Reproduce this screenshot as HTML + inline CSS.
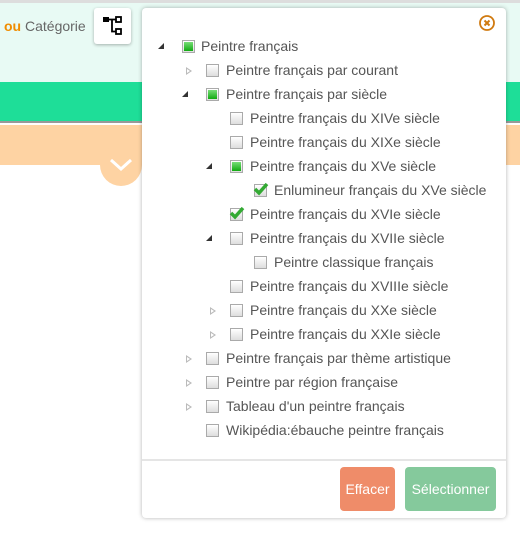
<!DOCTYPE html>
<html><head><meta charset="utf-8"><style>
*{box-sizing:border-box}
body{margin:0;width:520px;height:542px;overflow:hidden;background:#fff;font-family:"Liberation Sans",sans-serif;position:relative}
.top{position:absolute;left:0;top:0;width:520px;height:82px;background:#e8faf4;border-top:3px solid #ddd}
.green{position:absolute;left:0;top:82px;width:520px;height:41px;background:#1ede98;border-bottom:2px solid #999}
.peach{position:absolute;left:0;top:125px;width:520px;height:40px;background:#fed3a3}
.circ{position:absolute;left:100px;top:144px;width:42px;height:42px;border-radius:50%;background:#fed3a3}
.lbl{position:absolute;left:4px;top:18px;font-size:14px;color:#666}
.lbl b{color:#f08c00}
.ib{position:absolute;left:94px;top:8px;width:37px;height:36px;background:#fff;border-radius:3px;box-shadow:0 1px 3px rgba(0,0,0,.3)}
.pop{position:absolute;left:142px;top:8px;width:364px;height:510px;background:#fff;border-radius:4px;box-shadow:0 0 4px rgba(0,0,0,.3)}
.sep{position:absolute;left:0;top:451px;width:364px;height:2px;background:#e5e5e5}
.row{position:absolute;height:20px;font-size:14px;color:#555;white-space:nowrap;line-height:20px}
.cb{position:absolute;width:13px;height:13px;border:1px solid #aaa;background:linear-gradient(#fff,#ddd);top:4px}
.cb.p::after{content:"";position:absolute;left:1px;top:1px;width:9px;height:9px;background:linear-gradient(#7d7,#1a1)}
.tri{position:absolute;top:7px;width:0;height:0}
.tri.o{border-left:6px solid transparent;border-bottom:6px solid #333}
.tri.c{border-left:6px solid #bbb;border-top:4px solid transparent;border-bottom:4px solid transparent;}
.tri.c::after{content:"";position:absolute;left:-5px;top:-2px;border-left:3px solid #fff;border-top:2px solid transparent;border-bottom:2px solid transparent}
.btn{position:absolute;top:459px;height:44px;border-radius:4px;color:#fff;font-size:14px;line-height:44px;text-align:center}
</style></head><body>
<div class="top"></div><div class="green"></div><div class="peach"></div>
<div class="circ"><svg width="42" height="42"><path d="M11 16 L21 25 L31 16" stroke="#fff" stroke-width="3" fill="none"/></svg></div>
<div class="lbl"><b>ou</b> Catégorie</div>
<div class="ib"><svg width="37" height="36"><rect x="9" y="9" width="6" height="5" fill="#000"/><path d="M15 11.5H22M18 11.5V23.5H22" stroke="#000" stroke-width="1.8" fill="none"/><rect x="22" y="9" width="5" height="5" fill="#fff" stroke="#000" stroke-width="1.8"/><rect x="22" y="21" width="5" height="5" fill="#fff" stroke="#000" stroke-width="1.8"/></svg></div>
<div class="pop">
<svg style="position:absolute;left:336px;top:6px" width="18" height="18"><circle cx="9" cy="9" r="7" stroke="#d07a10" stroke-width="1.8" fill="none"/><path d="M6.5 6.5L11.5 11.5M11.5 6.5L6.5 11.5" stroke="#d07a10" stroke-width="2"/></svg>
<div class="sep"></div>
<div class="btn" style="left:198px;width:55px;background:#ef8c69">Effacer</div>
<div class="btn" style="left:263px;width:91px;background:#85c99c">Sélectionner</div>
</div>
<div id="tree"></div>
<script>
var rows=[[0,'o','p','Peintre français'],[1,'c','','Peintre français par courant'],[1,'o','p','Peintre français par siècle'],[2,'','','Peintre français du XIVe siècle'],[2,'','','Peintre français du XIXe siècle'],[2,'o','p','Peintre français du XVe siècle'],[3,'','k','Enlumineur français du XVe siècle'],[2,'','k','Peintre français du XVIe siècle'],[2,'o','','Peintre français du XVIIe siècle'],[3,'','','Peintre classique français'],[2,'','','Peintre français du XVIIIe siècle'],[2,'c','','Peintre français du XXe siècle'],[2,'c','','Peintre français du XXIe siècle'],[1,'c','','Peintre français par thème artistique'],[1,'c','','Peintre par région française'],[1,'c','','Tableau d\'un peintre français'],[1,'','','Wikipédia:ébauche peintre français']];
var h='';rows.forEach(function(r,i){var y=36+i*24,x=158+r[0]*24;
h+='<div class="row" style="left:'+x+'px;top:'+y+'px">';
if(r[1])h+='<div class="tri '+r[1]+'" style="left:'+(r[1]=='o'?0:4)+'px"></div>';
h+='<div class="cb '+(r[2]=='p'?'p':'')+'" style="left:24px"></div>';
if(r[2]=='k')h+='<svg style="position:absolute;left:22px;top:1px" width="18" height="16"><path d="M3 8L7 12L15 3" stroke="#3a3" stroke-width="3.5" fill="none"/></svg>';
h+='<span style="position:absolute;left:'+(r[0]==0?43:44)+'px">'+r[3]+'</span></div>';});
document.getElementById('tree').innerHTML=h;
</script>
</body></html>
